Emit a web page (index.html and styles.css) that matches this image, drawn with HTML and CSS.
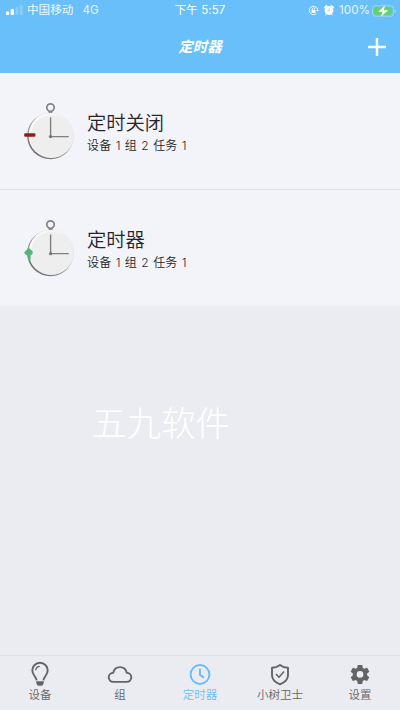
FILE: index.html
```html
<!DOCTYPE html>
<html lang="zh-CN">
<head>
<meta charset="utf-8">
<title>定时器</title>
<link rel="stylesheet" href="styles.css">
</head>
<body>
<header class="header">
  <div class="status">
    <div class="status-left">
      <svg class="signal" width="17" height="11" viewBox="0 0 17 11" fill="#fff"><rect y="6.5" width="3.2" height="3.5" rx=".8"/><rect x="4.7" y="4" width="3.2" height="6" rx=".8"/><rect x="9.4" y="2" width="3" height="8" rx=".8" opacity=".22"/><rect x="13.8" width="3" height="10" rx=".8" opacity=".22"/></svg>
      <span class="carrier">中国移动</span><span class="network">4G</span>
    </div>
    <div class="clock">下午 5:57</div>
    <div class="status-right">
      <svg width="11" height="11" viewBox="0 0 11 11" fill="none" stroke="#fff"><path d="M8.4 8.5A4.2 4.2 0 1 1 9.7 5.5" stroke-width=".9"/><path d="M8.2 5h2.7L9.6 6.8z" fill="#fff" stroke="none"/><rect x="3.5" y="4.9" width="4" height="2.9" rx=".4" fill="#fff" stroke="none"/><path d="M4.3 5V4a1.2 1.2 0 0 1 2.4 0v1" stroke-width=".8"/></svg>
      <svg class="alarm" width="10" height="11" viewBox="0 0 10 11"><path d="M.6 3.1a2 2 0 0 1 2.6-2.3zM9.4 3.1A2 2 0 0 0 6.8.8zM1.5 10.3l1-1.4M8.5 10.3l-1-1.4" fill="#fff" stroke="#fff"/><circle cx="5" cy="5.5" r="4.4" fill="#fff"/><path d="M5.1 3.4v2.5H3.3" fill="none" stroke="#69bff9" stroke-width=".7"/></svg>
      <span class="percent">100%</span>
      <svg width="25" height="12" viewBox="0 0 25 12"><rect x=".6" y=".8" width="20.8" height="10.4" rx="2.8" fill="none" stroke="#fff" stroke-opacity=".35"/><rect x="2" y="2.2" width="18" height="7.6" rx="1.5" fill="#63d568"/><path d="M22.7 4.2q1.5.5 1.5 1.8t-1.5 1.8z" fill="#fff" opacity=".35"/><path d="M12.8.5L6.2 6.8h4.1L9.2 11.6l6.9-6.4h-4.2z" fill="#fff"/></svg>
    </div>
  </div>
  <div class="nav">
    <h1 class="nav-title">定时器</h1>
    <svg class="add" width="18" height="18" viewBox="0 0 18 18"><path d="M9 .8v16.4M.8 9h16.4" stroke="#fff" stroke-width="2.5" stroke-linecap="round"/></svg>
  </div>
</header>
<svg class="defs" width="0" height="0">
  <defs>
    <linearGradient id="rim" x1="0" y1="1" x2="1" y2="0"><stop offset="0" stop-color="#606060"/><stop offset=".4" stop-color="#8c8c8c"/><stop offset=".65" stop-color="#dadadb"/><stop offset="1" stop-color="#ececec"/></linearGradient>
    <linearGradient id="face" x1="0" y1="0" x2="1" y2="1"><stop offset="0" stop-color="#fff"/><stop offset=".5" stop-color="#eee"/></linearGradient>
    <g id="watch">
      <path d="M25.3 10.5h4.4l-.6 3.2h-3.2z" fill="#808080"/>
      <circle cx="27.5" cy="7.6" r="3.7" fill="#f3f4f9" stroke="#858585" stroke-width="1.8"/>
      <circle cx="27.5" cy="36" r="23.3" fill="url(#rim)"/>
      <circle cx="28" cy="35.4" r="22.5" fill="url(#face)"/>
      <circle cx="28.8" cy="36.2" r="21.3" fill="#eeeeee"/>
      <path d="M27.6 17.5V36.6h18.2" fill="none" stroke="#808080" stroke-width="1.4"/>
      <circle cx="27.6" cy="36.6" r="1.7" fill="#777"/>
    </g>
  </defs>
</svg>
<main class="content">
  <section class="row">
    <svg class="watch" width="54" height="60" viewBox="0 0 54 60"><use href="#watch"/><rect x="1.2" y="33.3" width="11.2" height="3.4" rx="1" fill="#931b18"/></svg>
    <div class="info"><h2>定时关闭</h2><p>设备 1 组 2 任务 1</p></div>
  </section>
  <section class="row second">
    <svg class="watch" width="54" height="60" viewBox="0 0 54 60"><use href="#watch"/><path d="M5.6 30.2Q7.2 32.500 9.700 34.500Q10 37.500 7.700 38L7.400 45.500Q4.600 42 4.300 38.500Q1.500 37.500 1.200 35.300Q4 33 5.600 30.200z" fill="#55b278"/></svg>
    <div class="info"><h2>定时器</h2><p>设备 1 组 2 任务 1</p></div>
  </section>
  <div class="watermark">五九软件</div>
</main>
<nav class="tabs">
  <div class="tab">
    <svg width="24" height="26" viewBox="0 0 24 26" fill="none" stroke="#646464" stroke-width="1.9"><path d="M8.700 19.300C8.200 15.800 4.300 13.800 4.300 9.400a7.700 7.700 0 0 1 15.400 0c0 4.400-3.900 6.400-4.400 9.900"/><path d="M7.700 9.200A4.300 4.300 0 0 1 11.800 5.300" stroke-width="1.300"/><path d="M8.200 20.300h7.600v1.500q-.6 3-2.300 3h-3q-1.700 0-2.300-3z" fill="#646464" stroke="none"/></svg>
    <span>设备</span>
  </div>
  <div class="tab">
    <svg width="26" height="26" viewBox="0 0 26 26" fill="none" stroke="#646464" stroke-width="1.900" stroke-linejoin="round"><path d="M6.300 20.900A4.600 4.600 0 0 1 6.300 11.700C7 8.300 9.800 6.100 13 6.100s6 2.200 6.700 5.600a4.600 4.600 0 0 1 0 9.200z"/></svg>
    <span>组</span>
  </div>
  <div class="tab active">
    <svg width="24" height="26" viewBox="0 0 24 26" fill="none" stroke="#69bff9" stroke-width="2"><circle cx="12" cy="13.500" r="9.400"/><path d="M12 7.700V13.900l4 2.900"/></svg>
    <span>定时器</span>
  </div>
  <div class="tab">
    <svg width="24" height="26" viewBox="0 0 24 26" fill="none" stroke="#646464" stroke-width="1.900" stroke-linejoin="round"><path d="M12 4Q15.500 6.700 20 6.800V14q0 6.300-8 9.300Q4 20.300 4 14V6.800Q8.500 6.700 12 4z"/><path d="M8 13l3 3.200 5-5.600" stroke-width="1.500"/></svg>
    <span>小树卫士</span>
  </div>
  <div class="tab">
    <svg width="24" height="26" viewBox="0 0 24 26"><path transform="translate(.6 2) scale(.95)" fill="#646464" fill-rule="evenodd" d="M19.430 12.980c.040-.320.070-.640.070-.980s-.030-.660-.070-.980l2.110-1.650c.190-.150.240-.420.120-.640l-2-3.460c-.120-.220-.390-.300-.610-.220l-2.490 1c-.520-.400-1.080-.730-1.690-.980l-.380-2.650C14.460 2.180 14.250 2 14 2h-4c-.250 0-.460.180-.490.420l-.380 2.650c-.610.250-1.170.590-1.690.980l-2.490-1c-.230-.090-.490 0-.610.220l-2 3.460c-.130.220-.070.490.120.640l2.110 1.650c-.040.320-.070.650-.070.980s.030.660.070.980l-2.110 1.650c-.190.150-.240.420-.120.640l2 3.460c.120.220.390.300.610.220l2.490-1c.520.400 1.080.730 1.690.980l.380 2.650c.030.240.240.420.490.420h4c.250 0 .460-.180.490-.420l.380-2.650c.610-.250 1.170-.590 1.690-.980l2.490 1c.230.090.490 0 .610-.220l2-3.460c.120-.220.070-.490-.120-.640zM12 15.500A3.500 3.500 0 1 1 12 8.500a3.500 3.500 0 0 1 0 7z"/></svg>
    <span>设置</span>
  </div>
</nav>
</body>
</html>
```
FILE: styles.css
```css
* { box-sizing: border-box; }
body {
  margin: 0;
  width: 400px;
  height: 710px;
  overflow: hidden;
  display: flex;
  flex-direction: column;
  background: #ebecf1;
  color: #252527;
  font-family: Inter, "Noto Sans CJK SC", sans-serif;
}
svg { display: block; flex: none; }
h1, h2, p { margin: 0; font-weight: 350; }
.header { height: 73px; flex: none; background: #69bff9; color: #fff; }
.status {
  height: 21px;
  display: grid;
  grid-template-columns: 1fr auto 1fr;
  align-items: center;
  font-size: 11.6px;
  line-height: 21px;
}
.status-left, .status-right { display: flex; align-items: center; }
.status-left { padding-left: 6px; }
.carrier { margin-left: 4px; opacity: .9; }
.network { margin-left: 9px; opacity: .85; }
.clock { font-size: 11.5px; letter-spacing: .1px; }
.status-right { justify-content: flex-end; padding-right: 3px; }
.alarm { margin-left: 5px; }
.percent { margin: 0 2px 0 5px; font-size: 11.7px; opacity: .85; }
.nav {
  height: 52px;
  display: grid;
  grid-template-columns: 1fr auto 1fr;
  align-items: center;
}
.nav-title {
  grid-column: 2;
  font-size: 14.5px;
  line-height: 20px;
  font-weight: 700;
  font-style: italic;
}
.add { justify-self: end; margin-right: 14px; }
.defs { position: absolute; }
.content { flex: 1; }
.row {
  display: flex;
  height: 117px;
  padding: 27px 0 0 23px;
  background: #f3f4f9;
  border-bottom: 1px solid #e2e3e8;
}
.row.second { height: 116px; border-bottom: 0; }
.info { margin: 10px 0 0 10px; }
.info h2 { font-size: 19.3px; line-height: 27px; }
.info p { font-size: 12px; line-height: 18px; letter-spacing: .15px; word-spacing: .8px; }
.watermark {
  margin: 90px 0 0 92px;
  color: #fff;
  font-family: "Noto Sans CJK SC", sans-serif;
  font-size: 34.5px;
  font-weight: 300;
  line-height: 50px;
}
.tabs {
  display: grid;
  grid-template-columns: repeat(5, 1fr);
  height: 55px;
  padding-top: 5px;
  border-top: 1px solid #e2e3e7;
}
.tab {
  display: flex;
  flex-direction: column;
  align-items: center;
  color: #646464;
  font-size: 11.5px;
  font-weight: 350;
  line-height: 17px;
}
.tab.active { color: #69bff9; }
```
